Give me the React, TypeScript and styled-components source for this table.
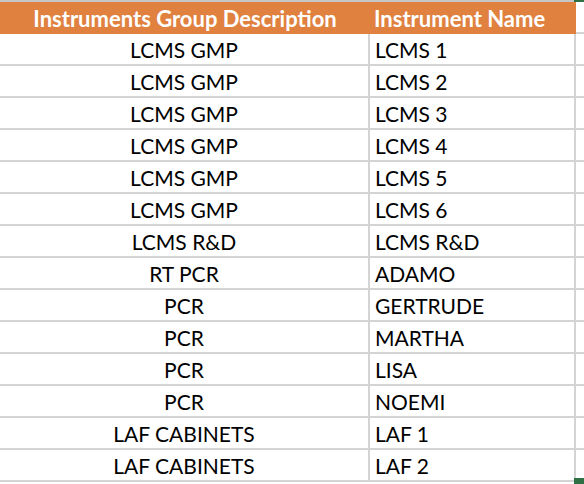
import React from "react";
import styled, { createGlobalStyle } from "styled-components";

const Global = createGlobalStyle`
  html, body { margin: 0; padding: 0; background: #ffffff; }
  body { font-family: Lato, "Open Sans", sans-serif; }
`;

const Sheet = styled.div`
  width: 584px;
  height: 484px;
  overflow: hidden;
  position: relative;
  background: #fff;
`;

const TopStrip = styled.div`
  height: 2px;
  display: grid;
  grid-template-columns: 574px 1fr;
  background: #c6c6c6;
`;

const TopSel = styled.div`
  grid-column: 2;
  background: #2f7045;
`;

const Grid = styled.div`
  display: grid;
  grid-template-columns: 370px 206px 1fr;
`;

const HeadCell = styled.div<{ $align: "center" | "left" }>`
  height: 32px;
  background: #e0813f;
  color: #ffffff;
  font-size: 22px;
  font-weight: 700;
  display: flex;
  align-items: center;
  justify-content: ${(p) => (p.$align === "center" ? "center" : "flex-start")};
  padding-left: ${(p) => (p.$align === "left" ? "4px" : "0")};
  white-space: nowrap;
`;

const HeadTail = styled.div`
  height: 30px;
  border-bottom: 2px solid #d4d4d4;
`;

const Cell = styled.div<{ $align: "center" | "left" }>`
  height: 30px;
  border-bottom: 2px solid #d4d4d4;
  border-right: 2px solid #d4d4d4;
  color: #000;
  font-size: 21px;
  display: flex;
  align-items: center;
  justify-content: ${(p) => (p.$align === "center" ? "center" : "flex-start")};
  padding-left: ${(p) => (p.$align === "left" ? "5px" : "0")};
  white-space: nowrap;
`;

const Tail = styled.div`
  height: 30px;
  border-bottom: 2px solid #d4d4d4;
`;

const FillHandle = styled.div`
  position: absolute;
  left: 574px;
  top: 478px;
  width: 10px;
  height: 6px;
  background: #2f7045;
`;

const rows: [string, string][] = [
  ["LCMS GMP", "LCMS 1"],
  ["LCMS GMP", "LCMS 2"],
  ["LCMS GMP", "LCMS 3"],
  ["LCMS GMP", "LCMS 4"],
  ["LCMS GMP", "LCMS 5"],
  ["LCMS GMP", "LCMS 6"],
  ["LCMS R&D", "LCMS R&D"],
  ["RT PCR", "ADAMO"],
  ["PCR", "GERTRUDE"],
  ["PCR", "MARTHA"],
  ["PCR", "LISA"],
  ["PCR", "NOEMI"],
  ["LAF CABINETS", "LAF 1"],
  ["LAF CABINETS", "LAF 2"],
];

export default function App() {
  return (
    <>
      <Global />
      <Sheet>
        <TopStrip>
          <TopSel />
        </TopStrip>
        <Grid>
          <HeadCell $align="center">Instruments Group Description</HeadCell>
          <HeadCell $align="left">Instrument Name</HeadCell>
          <HeadTail />
          {rows.map(([g, n], i) => (
            <React.Fragment key={i}>
              <Cell $align="center">{g}</Cell>
              <Cell $align="left">{n}</Cell>
              <Tail />
            </React.Fragment>
          ))}
        </Grid>
        <FillHandle />
      </Sheet>
    </>
  );
}
